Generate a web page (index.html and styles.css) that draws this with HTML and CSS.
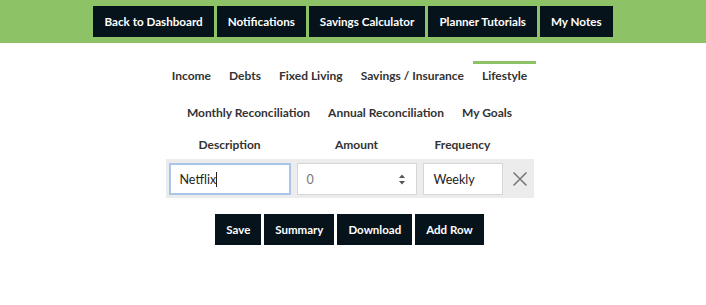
FILE: index.html
```html
<!DOCTYPE html>
<html>
<head>
<meta charset="utf-8">
<link rel="stylesheet" href="styles.css">
</head>
<body>
<header class="topbar">
  <a class="btn">Back to Dashboard</a>
  <a class="btn">Notifications</a>
  <a class="btn">Savings Calculator</a>
  <a class="btn">Planner Tutorials</a>
  <a class="btn">My Notes</a>
</header>
<main class="content">
  <nav class="tabs">
    <span class="tab">Income</span>
    <span class="tab">Debts</span>
    <span class="tab">Fixed Living</span>
    <span class="tab">Savings / Insurance</span>
    <span class="tab active">Lifestyle</span>
    <span class="tab">Monthly Reconciliation</span>
    <span class="tab">Annual Reconciliation</span>
    <span class="tab">My Goals</span>
  </nav>
  <div class="grid">
    <div class="labels">
      <div class="col-desc">Description</div>
      <div class="col-amt">Amount</div>
      <div class="col-freq">Frequency</div>
      <div class="col-x"></div>
    </div>
    <div class="row">
      <div class="field col-desc focused"><span class="val">Netflix</span><span class="caret"></span></div>
      <div class="field col-amt amount"><span class="val muted">0</span>
        <svg class="spin" width="8" height="13" viewBox="0 0 8 13"><path d="M1 5 L4 1.5 L7 5 Z M1 8 L4 11.5 L7 8 Z" fill="#555"/></svg>
      </div>
      <div class="field col-freq"><span class="val">Weekly</span></div>
      <div class="col-x">
        <svg width="16" height="16" viewBox="0 0 16 16"><path d="M1.5 1.5 L14.5 14.5 M14.5 1.5 L1.5 14.5" stroke="#7a7a7a" stroke-width="1.6" fill="none"/></svg>
      </div>
    </div>
  </div>
  <div class="actions">
    <a class="btn small">Save</a>
    <a class="btn small">Summary</a>
    <a class="btn small">Download</a>
    <a class="btn small">Add Row</a>
  </div>
</main>
</body>
</html>
```
FILE: styles.css
```css
body {
  margin: 0;
  font-family: Lato, "Open Sans", sans-serif;
  background: #fff;
  color: #333;
}
.topbar {
  background: #8dc266;
  height: 43px;
  box-sizing: border-box;
  padding-top: 6px;
  display: flex;
  justify-content: center;
  align-items: flex-start;
  gap: 3px;
}
.btn {
  display: flex;
  align-items: center;
  height: 31px;
  padding: 0 11px;
  background: #06131a;
  color: #fff;
  font-size: 11.65px;
  font-weight: bold;
  white-space: nowrap;
}
.btn.small {
  font-size: 11.5px;
}
.content {
  padding-right: 7px;
  display: flex;
  flex-direction: column;
  align-items: center;
}
.tabs {
  margin-top: 18px;
  width: 384px;
  display: flex;
  flex-wrap: wrap;
  justify-content: center;
}
.tab {
  padding: 3px 9px 13px;
  border-top: 3px solid transparent;
  font-size: 12px;
  font-weight: bold;
  line-height: 18px;
  color: #333;
  white-space: nowrap;
}
.tab.active {
  border-top-color: #8dc266;
}
.grid {
  display: flex;
  flex-direction: column;
}
.labels {
  display: flex;
  gap: 6px;
  padding: 0 3px;
  font-size: 12px;
  font-weight: bold;
  line-height: 18px;
  text-align: center;
  margin-top: 1px;
  color: #333;
}
.row {
  display: flex;
  align-items: center;
  gap: 6px;
  margin-top: 5px;
  padding: 4px 3px 3px;
  background: #ececec;
}
.col-desc { width: 122px; }
.col-amt { width: 120px; }
.col-freq { width: 80px; }
.col-x { width: 22px; display: flex; justify-content: center; align-items: center; }
.field {
  box-sizing: border-box;
  height: 32px;
  background: #fff;
  border: 1px solid #d6d6d6;
  display: flex;
  align-items: center;
  padding: 0 10px;
  font-size: 12.5px;
  color: #222;
}
.field.focused {
  border: 2px solid #a9c5e9;
  padding: 0 9px;
}
.field.amount { padding-left: 9px; }
.muted { color: #777; }
.val { flex: 0 0 auto; }
.caret {
  width: 1px;
  height: 15px;
  background: #222;
}
.amount .val { flex: 1; }
.actions {
  margin-top: 16px;
  display: flex;
  gap: 3px;
}
```
